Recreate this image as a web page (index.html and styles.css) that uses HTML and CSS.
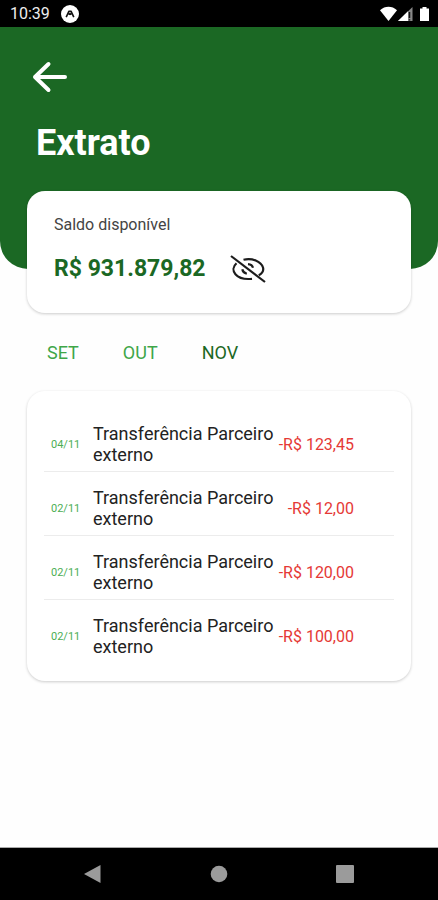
FILE: index.html
```html
<!DOCTYPE html>
<html lang="pt-BR">
<head>
    <meta charset="UTF-8">
    <meta name="viewport" content="width=device-width, initial-scale=1.0">
    <title>Extrato</title>
    <link rel="stylesheet" href="styles.css">
</head>
<body>
    <div class="status-bar">
        <span class="clock">10:39</span>
        <svg class="app-icon" width="18" height="18" viewBox="0 0 18 18" aria-hidden="true">
            <circle cx="9" cy="9" r="9" fill="#fff"/>
            <path d="M5.200 12.200 8 6.200h2l2.800 6M7.800 9.800 9 8.400l1.200 1.400" fill="none" stroke="#111" stroke-width="1.600" stroke-linejoin="round"/>
        </svg>
        <svg class="signals" width="50" height="16" viewBox="0 0 50 16" aria-hidden="true">
            <path d="M0 4.200C5-.4 12-.4 17 4.200L8.500 15z" fill="#fff"/>
            <path d="M18 15 32.500 1V15z" fill="#888"/>
            <path d="M18 15 28 5.300V15z" fill="#fff"/>
            <path d="M29.500 6v6M29.500 13.200v1.300" stroke="#111" stroke-width="1.500"/>
            <path d="M40 2.500h2.500V1h4v1.500H49V15h-9z" fill="#fff"/>
        </svg>
    </div>

    <header class="header">
        <button class="back" type="button" aria-label="Voltar">
            <svg width="36" height="32" viewBox="0 0 36 32" aria-hidden="true">
                <path d="M33 16H3M16.500 3 3 16l13.500 13" fill="none" stroke="#fff" stroke-width="4" stroke-linecap="round" stroke-linejoin="round"/>
            </svg>
        </button>
        <h1>Extrato</h1>
    </header>

    <main class="content">
        <section class="card balance">
            <p class="balance-label">Saldo disponível</p>
            <div class="balance-row">
                <strong class="balance-value">R$ 931.879,82</strong>
                <button class="toggle" type="button" aria-label="Ocultar saldo">
                    <svg width="36" height="28" viewBox="0 0 36 28" fill="none" stroke="#1c1c1c" stroke-width="2.200" aria-hidden="true">
                        <path d="M1 1 35 27"/>
                        <path d="M13.500 4.800C22 2.500 31 6.500 33 12.500c.8 3-1 6-4.200 7.800"/>
                        <path d="M6.500 8.300C-1 15 6 25.500 22 23.800"/>
                        <path d="M18 9.200c2.500.2 4.500 1.600 5 3.600M12.300 14.300c.4 2.200 2 3.800 4.500 4.400"/>
                    </svg>
                </button>
            </div>
        </section>

        <nav class="months">
            <a href="#set">SET</a>
            <a href="#out">OUT</a>
            <a href="#nov" class="active">NOV</a>
        </nav>

        <section class="card statement">
            <table>
                <tbody>
                    <tr>
                        <td class="date">04/11</td>
                        <td class="description">Transferência Parceiro externo</td>
                        <td class="amount">-R$ 123,45</td>
                    </tr>
                    <tr>
                        <td class="date">02/11</td>
                        <td class="description">Transferência Parceiro externo</td>
                        <td class="amount">-R$ 12,00</td>
                    </tr>
                    <tr>
                        <td class="date">02/11</td>
                        <td class="description">Transferência Parceiro externo</td>
                        <td class="amount">-R$ 120,00</td>
                    </tr>
                    <tr>
                        <td class="date">02/11</td>
                        <td class="description">Transferência Parceiro externo</td>
                        <td class="amount">-R$ 100,00</td>
                    </tr>
                </tbody>
            </table>
        </section>
    </main>

    <div class="nav-bar">
        <button type="button" aria-label="Voltar">
            <svg width="18" height="18" viewBox="0 0 18 18" aria-hidden="true"><path d="M16.500 0v18L0 9z" fill="#9b9b9b"/></svg>
        </button>
        <button type="button" aria-label="Início">
            <svg width="18" height="18" viewBox="0 0 18 18" aria-hidden="true"><circle cx="9" cy="9" r="8.300" fill="#9b9b9b"/></svg>
        </button>
        <button type="button" aria-label="Recentes">
            <svg width="18" height="18" viewBox="0 0 18 18" aria-hidden="true"><rect width="18" height="18" rx="1" fill="#9b9b9b"/></svg>
        </button>
    </div>
</body>
</html>
```

FILE: styles.css
```css
* {
    margin: 0;
    padding: 0;
    box-sizing: border-box;
}

body {
    display: flex;
    flex-direction: column;
    min-height: 100vh;
    font-family: Roboto, sans-serif;
    background-color: #fefefe;
    color: #222;
}

button {
    display: block;
    border: none;
    background: none;
    cursor: pointer;
}

svg {
    display: block;
}

.status-bar {
    display: flex;
    align-items: center;
    height: 27px;
    padding: 0 8px 0 10px;
    background-color: #000;
    color: #eee;
}

.clock {
    font-size: 16px;
}

.app-icon {
    margin-left: 11px;
}

.signals {
    margin-left: auto;
}

.header {
    height: 242px;
    padding: 34px 32px 0;
    background-color: #1b6824;
    border-radius: 0 0 28px 28px;
}

.header h1 {
    margin-top: 27px;
    padding-left: 4px;
    font-size: 36px;
    line-height: 46px;
    color: #fff;
}

.content {
    flex: 1;
    margin-top: -78px;
    padding: 0 27px 24px;
}

.card {
    background-color: #fff;
    border-radius: 18px;
    box-shadow: 0 1px 3px rgba(0, 0, 0, 0.2);
}

.balance {
    padding: 24px 27px;
}

.balance-label {
    font-size: 16px;
    line-height: 20px;
    color: #444;
}

.balance-row {
    display: flex;
    align-items: center;
    gap: 24px;
    margin-top: 20px;
    padding-bottom: 6px;
}

.balance-value {
    font-size: 23px;
    line-height: 28px;
    color: #1b6824;
}

.months {
    display: flex;
    gap: 44px;
    padding: 29px 20px 27px;
    font-size: 18px;
    line-height: 22px;
}

.months a {
    color: #3fa648;
    text-decoration: none;
}

.months .active {
    color: #1b6824;
}

.statement {
    padding: 17px 17px 18px;
}

table {
    width: 100%;
    border-collapse: collapse;
}

tr {
    border-bottom: 1px solid #ececec;
}

tr:last-child {
    border-bottom: none;
}

td {
    padding: 15px 0 6px;
    line-height: 21px;
}

.date {
    width: 49px;
    padding-left: 7px;
    font-size: 11px;
    color: #4cae54;
}

.description {
    font-size: 18px;
}

.amount {
    width: 114px;
    padding-right: 40px;
    font-size: 16px;
    text-align: right;
    white-space: nowrap;
    color: #e53935;
}

.nav-bar {
    display: flex;
    justify-content: space-between;
    align-items: center;
    height: 53px;
    padding: 0 84px;
    background-color: #000;
    border-top: 1px solid #aaa;
}
```
